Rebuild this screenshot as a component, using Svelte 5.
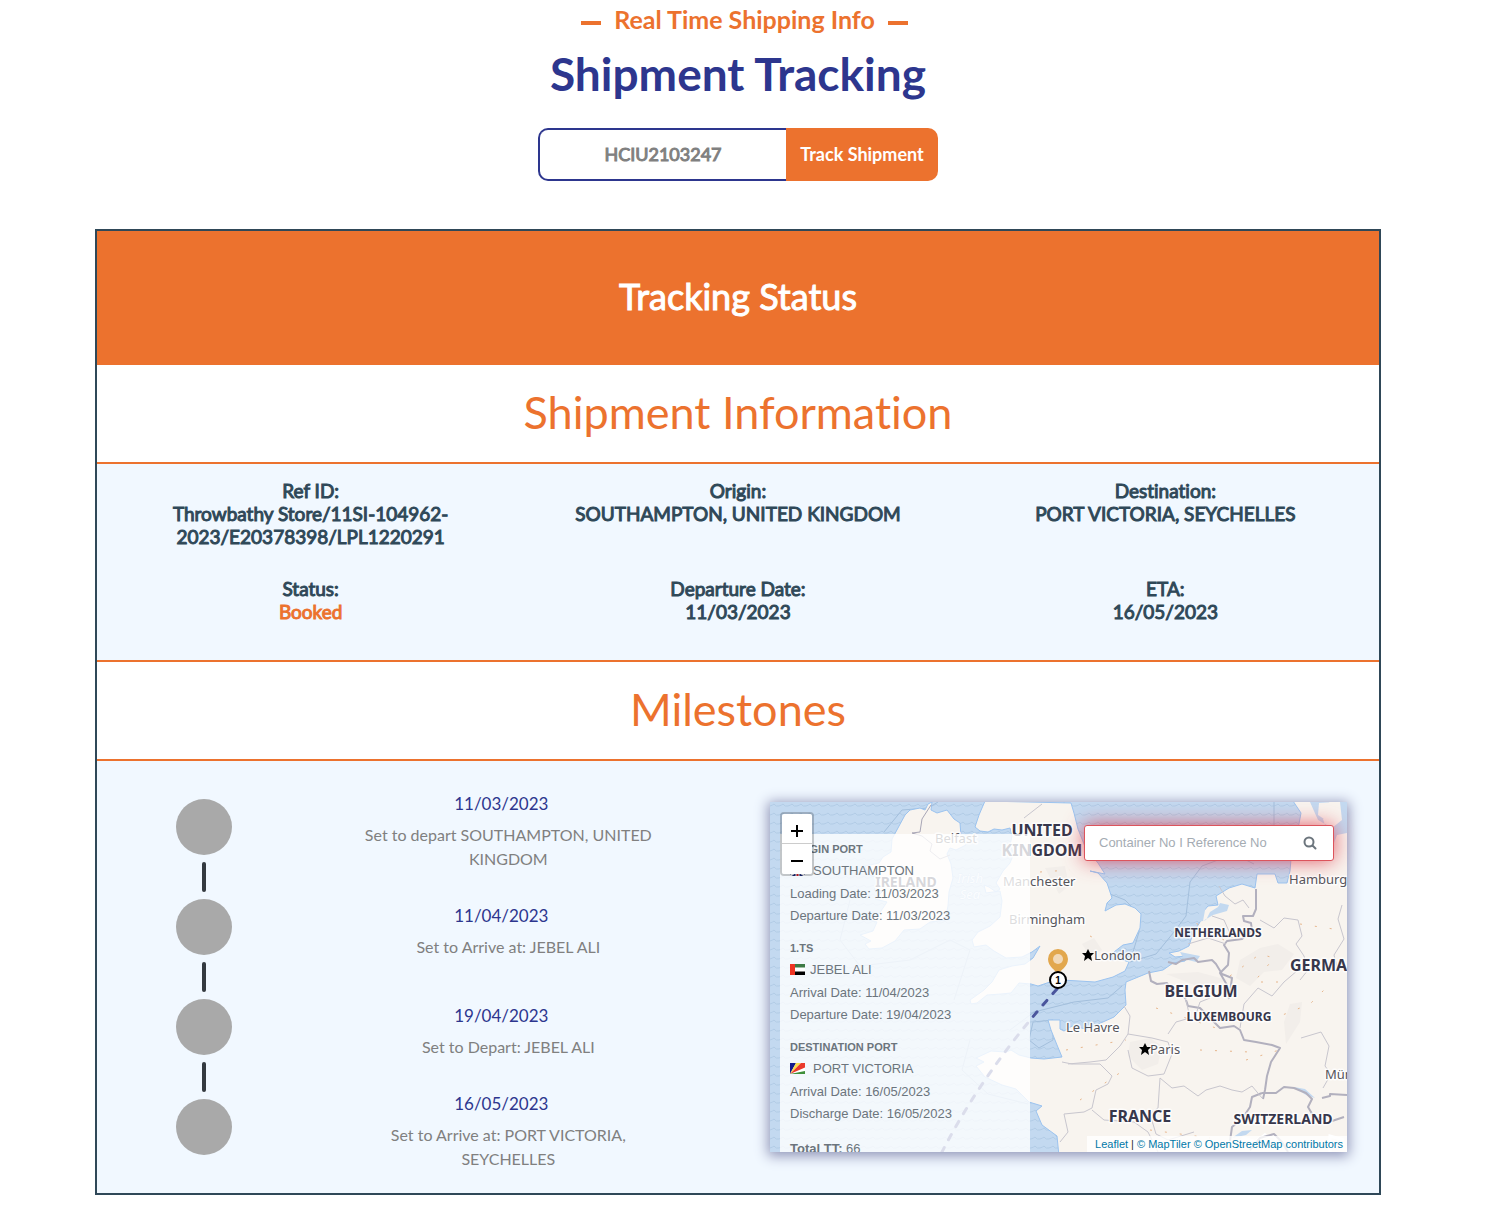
<script>
  let trackingNumber = $state('HCIU2103247');
  let mapQuery = $state('');

  const details = [
    { label: 'Ref ID:', value: 'Throwbathy Store/11SI-104962-2023/E20378398/LPL1220291' },
    { label: 'Origin:', value: 'SOUTHAMPTON, UNITED KINGDOM' },
    { label: 'Destination:', value: 'PORT VICTORIA, SEYCHELLES' },
    { label: 'Status:', value: 'Booked', accent: true },
    { label: 'Departure Date:', value: '11/03/2023' },
    { label: 'ETA:', value: '16/05/2023' }
  ];

  const milestones = [
    { date: '11/03/2023', text: 'Set to depart SOUTHAMPTON, UNITED KINGDOM' },
    { date: '11/04/2023', text: 'Set to Arrive at: JEBEL ALI' },
    { date: '19/04/2023', text: 'Set to Depart: JEBEL ALI' },
    { date: '16/05/2023', text: 'Set to Arrive at: PORT VICTORIA, SEYCHELLES' }
  ];

  const ports = [
    { title: 'ORIGIN PORT', flag: 'gb', name: 'SOUTHAMPTON', rows: ['Loading Date: 11/03/2023', 'Departure Date: 11/03/2023'] },
    { title: '1.TS', flag: 'ae', name: 'JEBEL ALI', transit: true, rows: ['Arrival Date: 11/04/2023', 'Departure Date: 19/04/2023'] },
    { title: 'DESTINATION PORT', flag: 'sc', name: 'PORT VICTORIA', rows: ['Arrival Date: 16/05/2023', 'Discharge Date: 16/05/2023'] }
  ];

  const countries = [
    { x: 1042, y: 836, size: 16, text: 'UNITED' },
    { x: 1042, y: 856, size: 16, text: 'KINGDOM' },
    { x: 906, y: 887, size: 14, text: 'IRELAND' },
    { x: 1218, y: 937, size: 12, text: 'NETHERLANDS' },
    { x: 1201, y: 997, size: 16, text: 'BELGIUM' },
    { x: 1229, y: 1021, size: 12, text: 'LUXEMBOURG' },
    { x: 1330, y: 971, size: 16, text: 'GERMANY' },
    { x: 1140, y: 1122, size: 16, text: 'FRANCE' },
    { x: 1283, y: 1124, size: 14, text: 'SWITZERLAND' }
  ];

  const cities = [
    { x: 935, y: 843, text: 'Belfast' },
    { x: 1003, y: 886, text: 'Manchester' },
    { x: 1009, y: 924, text: 'Birmingham' },
    { x: 1094, y: 960, text: 'London' },
    { x: 1066, y: 1032, text: 'Le Havre' },
    { x: 1150, y: 1054, text: 'Paris' },
    { x: 1289, y: 884, text: 'Hamburg' },
    { x: 1325, y: 1079, text: 'München' }
  ];
</script>

<main>
  <header>
    <p class="eyebrow"><span>Real Time Shipping Info</span></p>
    <h1>Shipment Tracking</h1>
    <form class="track" onsubmit={(e) => e.preventDefault()}>
      <input type="text" aria-label="Tracking number" bind:value={trackingNumber} />
      <button type="submit">Track Shipment</button>
    </form>
  </header>

  <section class="card">
    <h2 class="banner">Tracking Status</h2>

    <h3>Shipment Information</h3>
    <dl class="details">
      {#each details as item}
        <div>
          <dt>{item.label}</dt>
          <dd class:accent={item.accent}>{item.value}</dd>
        </div>
      {/each}
    </dl>

    <h3>Milestones</h3>
    <div class="milestones">
      <ol>
        {#each milestones as step}
          <li>
            <div class="marker"><span class="dot"></span><span class="bar"></span></div>
            <div class="step">
              <p class="date">{step.date}</p>
              <p class="text">{step.text}</p>
            </div>
          </li>
        {/each}
      </ol>

      <div class="map">
        <svg class="tiles" viewBox="770 802 577 350" preserveAspectRatio="xMinYMin slice" role="img" aria-label="Route map">
          <defs>
            <pattern id="waves" width="9" height="9" patternUnits="userSpaceOnUse">
              <path d="M0 3q2 3 5 2t4-2" fill="none" stroke="#b1cbe5" stroke-width="1" />
            </pattern>
          </defs>
          <rect x="770" y="802" width="577" height="350" fill="#c3d9f0" />
          <rect x="770" y="802" width="577" height="350" fill="url(#waves)" />

          <g fill="none" stroke="#a3bfdc">
            <path d="M1064 802l3 22 12 34 16 22 10 12 20 8 12 12 2 20-6 20-8 18" />
            <path d="M1130 962l26-8 18-22 12-16 4-34 12-16 32-12 20 10" />
            <path d="M884 832l18-22 26-2 10-6M1010 1030l24-18 40-10 34-4 14-12M1033 1022l20-2v20l-14 8-10-8zM1032 1095l16 14 6 24 16 19" />
            <path d="M1274 802v26l-26 6 24 10M850 900l-10 40 20 26 50-6 40-20 20 10-16 50" />
            <path d="M970 1040l-8 30 26 24 40 10" />
          </g>

          <g fill="#f8f4ef" stroke="#9bc3ef" stroke-width="1">
            <path d="M905 815l5-5 10-2 5 2 3-6 4-2-1 8 6 3 10-3 7 9 6 4 1 13 5 9-10 5-6-2-3 6 4 10 2 14-4 14-1 14-3 14-15 2-10 7-16 1-9 11-13 7-13 1-4-5 6-3-11-6 13-4 4-9-8-2 10-6 8-12-12-3 8-8-9-1 6-12-10-3-5-9 14-3 4-6 8-5 1-13z" />
            <path d="M985 801l-6 14-4 12 5 4 8 1 6-3 8 1 8-2 2 8-2 9 4 8-4 10-7 8-7 12 4 6-4 3-7-5-5-2 2 8 14-2 2 10-2 16-10 9-12 6-6 8 2 7 12-2 8 6 12 7 16-1 10-5 8-6-7 12-8 6-13 2-13 4-7 12-8 8-14 10 1 4 6-1 10-8 14-1 10-1 8-10 12 1 7 2 12-4 12-2 17 1 16 1 18-5 12-6 4-9-9-3-10 1 4-8 9-7 10-2 7-15 1-14-6-6-10-4-9 1-11 6 2-8 5-5-5-15-9-10-8-2 15 3-7-11-12-14-8-20-4-16-3-10z" />
            <path d="M1350 801h-57l8 12-3 16-6 18-2 24-3 12h-9l-3-9h-18l-2 14-13-4-13 4-13 8 2 9-10 1-6 7-2 9-7 11-4 13-10 5-10 2 6 4 12-1-2 5-12 2-10 7-15 3-22 9-1 8 1 15-12 12-20 9-8 3-14-3-8 5-4-2v-9h-12l3 10 6 15 5 12-18 2-13-1-12-3-8-5-5 2-15-1-15 7 8 4-8 4 9 11 17 8 14 4 13 13 13 4-6 5 6 14 15 11 2 20H1350z" />
          </g>
          <path d="M1199 908l4-6 3 3-3 16 10-6 14-4 2-6-9-2-2 4-8 5-4 8-7 2z" fill="#c3d9f0" />
          <path d="M1347 833l-10 2-6 16-8 6-4-12 8-14-4-12 8-4-2-14h18zM1310 802l8 18 14 8 10-8-2-18z" fill="#c3d9f0" />
          <path d="M1319 803l-1 12 9 6 11-3-3-16z" fill="#f8f4ef" />
          <g fill="#c3d9f0">
            <path d="M1232 1138l10-7 10-1-6 5zM1294 1087l12 8 9 3-10-9zM1200 956l-20-4 4 7 12 3z" />
          </g>
          <g fill="#f2eeea">
            <path d="M1240 960l20-12 18-4 16 10-12 16-18 2-14 14-14-8zM1130 1042l20-4 12 8-4 18-16 6-14-14zM1284 1022l6-18 12-2-2 20-14 22zM1166 974l32-2 30 8-26 8zM1045 868l20-2 4 20-10 8zM1082 944l12-6 8 12-12 6z" />
          </g>
          <path d="M1280 1150l-6-14-14 2-10 8M1330 1152v-16l14 4M1232 1148l12-10 12 4 10-8" fill="none" stroke="#fff" stroke-width="3" />

          <path d="M931 805l-9 14-2 13-8 1 10 3 10 8-2 7 10 8 10-4" fill="none" stroke="#a8a6b6" />
          <g fill="none" stroke="#b2b0be" stroke-width="2" stroke-linejoin="round">
            <path d="M1256 889v20l-3 7h-10l1 5 7 2 1 8-10 8-15 2-3 4 5 8-1 12-8 8 7 12 2 14M1168 962l8 2 6-4 12-2 4 4 14-2 4 4 6 10 10 4-2 14M1149 971l2 10 6 3 10-1 5 8 8 2 6 6M1186 1000l2 6 12 2 8 8 12 12 14-2 6 4 4 10 12 2 16 3 8 3-9 14-4 14-2 14-2 9" />
            <path d="M1262 1093l-10 4-2 10-8 12-10 8-2 14M1262 1093l14 0 8-6 10 1 12 5 6 6-4 8 6 10 10 2 4-4 4 6 12-4M1322 1098l8-2v-2l17 1M1250 1150l10-12 14-4 8 8 6 10" />
          </g>
          <g fill="none" stroke="#c8c6ce">
            <path d="M1124 1006l6 10-2 18-8 12-14 14-16 2-22 2M1062 1062l10 2 28 0 12 12-4 8-12 6-4 18-8 4-20 2 4 18-8 10M1168 1034l8-12 14-4-4-18M1128 1034l24 4 16 4 4 12-8 20-16 2-16-8-4-18M1160 1078l12 10 12-2 14 10 8-6 14-4 12 4 10 2 10-6 10 12M1160 1078l-2 30-8 6 6 20 12 6 26-8M1092 1110l12 10 30 2 14 10 10 20" />
            <path d="M1024 818l18-14M1219 886l6 10 10 8 8-4 6 8M1212 916l12 4 8 18M1260 920l14 8 10-10 14 2 4 16-6 8 8 12 4 14-8 10M1342 905l-4 14 6 20-10 16 4 16M1298 970l-14 12-12 14-14-8-14 16-4 24M1301 1038l20-6 8 14-4 20 6 8-8 14M1188 944l20-6 18 6M1196 1014l4-12 10-4" />
          </g>
          <g fill="none" stroke="#e7b68c" stroke-dasharray="2 13">
            <path d="M1230 976l30-22 14 4-20 24 26 0M1270 1020l40-16 20-20M1156 1008l60 20M1246 1060l40-12M1066 1050l60-10M1080 1100l44-30M1300 924l40 6M1090 936l12 6M1040 872l30-2M1224 940l-30-18M1200 1050l50 2M1150 1130l60 8" />
          </g>

          <g class="country" text-anchor="middle">
            {#each countries as c}
              <text x={c.x} y={c.y} font-size={c.size}>{c.text}</text>
            {/each}
          </g>
          <g class="city">
            {#each cities as c}
              <text x={c.x} y={c.y}>{c.text}</text>
            {/each}
          </g>
          <g class="sea" text-anchor="middle">
            <text x="970" y="883">Irish</text>
            <text x="970" y="899">Sea</text>
          </g>
          <path d="M1088 949l2 4h4l-3 3 1 5-4-3-4 3 1-5-3-3h4zM1145 1043l2 4h4l-3 3 1 5-4-3-4 3 1-5-3-3h4z" fill="#000" />

          <path d="M1057 989Q984 1070 942 1152" fill="none" stroke="#4a559d" stroke-width="3" stroke-linecap="round" stroke-dasharray="6 9" />
          <path d="M1058 975c-2-5-10-8-10-16a10 10 0 0 1 20 0c0 8-8 11-10 16z" fill="#e2a74d" />
          <circle cx="1058" cy="959" r="5" fill="#f2d9b8" />
          <circle cx="1058" cy="980" r="8" fill="#fff" stroke="#000" stroke-width="2" />
          <text class="stop" x="1058" y="984" text-anchor="middle">1</text>
        </svg>

        <div class="ports">
          {#each ports as port}
            <section>
              <h4>{port.title}</h4>
              <p class="port-name" class:transit={port.transit}>
                <svg class="flag" viewBox="0 0 30 22" aria-hidden="true">
                  {#if port.flag === 'gb'}
                    <path d="M0 0h30v22H0z" fill="#1c2c7c" />
                    <path d="M0 0l30 22M30 0L0 22" stroke="#fff" stroke-width="4" />
                    <path d="M15 0v22M0 11h30" stroke="#fff" stroke-width="8" />
                    <path d="M15 0v22M0 11h30" stroke="#d8202f" stroke-width="4" />
                  {:else if port.flag === 'ae'}
                    <path d="M0 0h30v22H0z" fill="#fff" />
                    <path d="M8 0h22v7H8z" fill="#3d7a45" />
                    <path d="M8 15h22v7H8z" />
                    <path d="M0 0h10v22H0z" fill="#ee3524" />
                  {:else}
                    <path d="M0 0h30v22H0z" fill="#fff" />
                    <path d="M0 22V0h12z" fill="#131b8c" />
                    <path d="M0 22L12 0h10z" fill="#fbdc4a" />
                    <path d="M0 22L22 0h8v9z" fill="#ea3a2c" />
                    <path d="M0 22l30-6v6z" fill="#3f8f3a" />
                  {/if}
                </svg>
                {port.name}
              </p>
              {#each port.rows as row}
                <p>{row}</p>
              {/each}
            </section>
          {/each}
          <p class="total"><b>Total TT:</b> 66</p>
        </div>

        <div class="zoom">
          <button type="button" aria-label="Zoom in"><svg viewBox="0 0 14 14"><path d="M7 1v12M1 7h12" /></svg></button>
          <button type="button" aria-label="Zoom out"><svg viewBox="0 0 14 14"><path d="M1 7h12" /></svg></button>
        </div>

        <form class="search" onsubmit={(e) => e.preventDefault()}>
          <input type="text" aria-label="Container or reference number" placeholder="Container No I Reference No" bind:value={mapQuery} />
          <button type="submit" aria-label="Search">
            <svg viewBox="0 0 28 28"><circle cx="12" cy="12" r="9" /><path d="M19 19l6 6" /></svg>
          </button>
        </form>

        <p class="credit"><a href="#leaflet">Leaflet</a> | <a href="#maptiler">© MapTiler</a> <a href="#osm">© OpenStreetMap contributors</a></p>
      </div>
    </div>
  </section>
</main>

<style>
  :global(body) {
    background: #fff;
  }
  main {
    padding: 0 107px 24px 95px;
    font-family: Lato, 'Liberation Sans', sans-serif;
    font-variant-ligatures: none;
    color: #2f4858;
  }
  h1, h2, h3, h4, p, dl, dd, ol {
    margin: 0;
    padding: 0;
  }
  header {
    display: flex;
    flex-direction: column;
    align-items: center;
    text-align: center;
  }
  .eyebrow {
    display: flex;
    align-items: center;
    gap: 13px;
    padding-left: 13px;
    font-size: 25px;
    line-height: 38px;
    font-weight: 700;
    color: #ec722e;
  }
  .eyebrow::before,
  .eyebrow::after {
    content: '';
    width: 20px;
    height: 4px;
    margin-top: 8px;
    background: #ec722e;
  }
  h1 {
    font-size: 46px;
    line-height: 72px;
    font-weight: 700;
    color: #2d368e;
  }
  .track {
    display: flex;
    width: 400px;
    height: 53px;
    margin: 18px 0 48px;
  }
  .track input {
    flex: 1;
    min-width: 0;
    box-sizing: border-box;
    padding: 0 0 2px;
    border: 2px solid #2d368e;
    border-right: 0;
    border-radius: 10px 0 0 10px;
    outline: 0;
    background: #fff;
    font: 400 18px Lato, sans-serif;
    color: #808080;
    -webkit-text-stroke: 1px #808080;
    text-align: center;
  }
  .track button {
    width: 152px;
    padding: 0 0 2px;
    border: 0;
    border-radius: 0 10px 10px 0;
    background: #ec722e;
    font: 700 18px Lato, sans-serif;
    color: #fff;
  }
  .card {
    border: 2px solid #2f4858;
  }
  .banner {
    padding: 30px 0 34px;
    background: #ec722e;
    font-size: 36px;
    line-height: 70px;
    font-weight: 400;
    color: #fff;
    -webkit-text-stroke: 1px #fff;
    text-align: center;
  }
  h3 {
    padding-bottom: 2px;
    border-bottom: 2px solid #ec722e;
    font-size: 45px;
    line-height: 95px;
    font-weight: 400;
    color: #ec722e;
    text-align: center;
  }
  .details {
    display: grid;
    grid-template-columns: repeat(3, 1fr);
    row-gap: 29px;
    padding: 15px 0 37px;
    border-bottom: 2px solid #ec722e;
    background: #f1f8ff;
    font-size: 19px;
    line-height: 23px;
    -webkit-text-stroke: 1px;
    text-align: center;
  }
  .details > div {
    padding: 0 40px;
  }
  .accent {
    color: #ec722e;
  }
  .milestones {
    display: grid;
    grid-template-columns: 1fr 1fr;
    align-items: center;
    padding: 38px 0;
    background: #f1f8ff;
  }
  ol {
    list-style: none;
  }
  li {
    display: grid;
    grid-template-columns: 1fr 2fr;
    height: 100px;
  }
  li:last-child {
    height: 56px;
  }
  .marker {
    display: flex;
    flex-direction: column;
    align-items: center;
    gap: 7px;
  }
  .dot {
    width: 56px;
    height: 56px;
    border-radius: 50%;
    background: #a9a9a9;
  }
  .bar {
    width: 4px;
    height: 30px;
    border-radius: 2px;
    background: #343a40;
  }
  li:last-child .bar {
    display: none;
  }
  .step {
    display: flex;
    flex-direction: column;
    justify-content: center;
    gap: 7px;
    height: 54px;
    padding: 5px 72px 0 40px;
    text-align: center;
  }
  .date {
    margin-right: 14px;
    font-size: 17px;
    line-height: 24px;
    color: #2d368e;
  }
  .text {
    font-size: 16px;
    line-height: 24px;
    color: #808080;
  }

  .map {
    position: relative;
    height: 350px;
    margin: 0 32px;
    box-shadow: 0 2px 12px 2px #9095b8;
    font-family: 'Liberation Sans', Arial, sans-serif;
  }
  .tiles {
    display: block;
    width: 100%;
    height: 100%;
  }
  .tiles text {
    font-family: 'Noto Sans', sans-serif;
    stroke: #fff;
    stroke-opacity: 0.8;
    stroke-width: 3px;
    stroke-linejoin: round;
    paint-order: stroke;
  }
  .country {
    font-weight: 700;
    fill: #37374b;
  }
  .city {
    font-size: 13px;
    fill: #55555b;
  }
  .tiles .sea text {
    font-size: 13px;
    font-style: italic;
    fill: #e9f2fb;
    stroke: #9bbde0;
    stroke-width: 1px;
  }
  .tiles .stop {
    font: 700 10px 'Liberation Sans', sans-serif;
    fill: #000;
    stroke: none;
  }
  .ports {
    position: absolute;
    top: 32px;
    bottom: 0;
    left: 10px;
    box-sizing: border-box;
    width: 250px;
    padding: 5px 10px 0;
    overflow: hidden;
    background: rgba(255, 255, 255, 0.8);
    font-size: 13px;
    line-height: 22px;
    color: #6c757d;
  }
  .ports section {
    margin-bottom: 11px;
  }
  h4 {
    font-size: 11px;
    line-height: 20px;
  }
  .port-name {
    display: flex;
    align-items: center;
    gap: 8px;
    line-height: 24px;
  }
  .port-name.transit {
    gap: 5px;
  }
  .flag {
    width: 15px;
    height: 11px;
    margin-bottom: 2px;
  }
  .total {
    padding-top: 2px;
  }
  .zoom {
    position: absolute;
    top: 10px;
    left: 10px;
    display: flex;
    flex-direction: column;
    border: 2px solid rgba(0, 0, 0, 0.2);
    border-radius: 4px;
    background-clip: padding-box;
  }
  .zoom button {
    display: grid;
    place-items: center;
    box-sizing: border-box;
    width: 30px;
    height: 30px;
    padding: 4px 0 0;
    border: 0;
    border-radius: 0 0 2px 2px;
    background: #fff;
  }
  .zoom button:first-child {
    border-bottom: 1px solid #ccc;
    border-radius: 2px 2px 0 0;
  }
  .zoom svg {
    width: 14px;
    height: 14px;
    fill: none;
    stroke: #000;
    stroke-width: 2;
  }
  .search {
    position: absolute;
    top: 23px;
    right: 13px;
    display: flex;
    box-sizing: border-box;
    width: 250px;
    height: 36px;
    border: 1px solid #dc545c;
    border-radius: 3px;
    background: #fff;
    box-shadow: 0 0 20px rgba(220, 53, 69, 0.8);
  }
  .search input {
    flex: 1;
    min-width: 0;
    padding: 0 0 2px 14px;
    border: 0;
    outline: 0;
    background: transparent;
    font: 13px 'Liberation Sans', sans-serif;
    color: #6c757d;
  }
  .search input::placeholder {
    color: #a5acb3;
    opacity: 1;
  }
  .search button {
    display: grid;
    place-items: center;
    width: 46px;
    padding: 0;
    border: 0;
    background: transparent;
  }
  .search svg {
    width: 14px;
    height: 14px;
    fill: none;
    stroke: #6c757d;
    stroke-width: 4;
    stroke-linecap: round;
  }
  .credit {
    position: absolute;
    right: 0;
    bottom: 0;
    padding: 0 4px 0 8px;
    background: rgba(255, 255, 255, 0.8);
    font-size: 11px;
    line-height: 16px;
    color: #333;
    white-space: nowrap;
  }
  .credit a {
    color: #0078a8;
    text-decoration: none;
  }
</style>
